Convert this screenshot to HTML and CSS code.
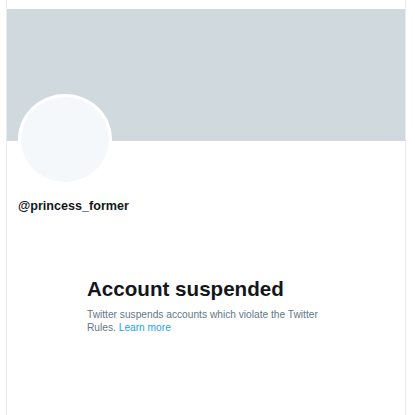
FILE: index.html
```html
<!DOCTYPE html>
<html>
<head>
<meta charset="utf-8">
<link rel="stylesheet" href="styles.css">
</head>
<body>
<div class="page">
  <div class="banner"></div>
  <div class="avatar"></div>
  <div class="handle">@princess_former</div>
  <div class="notice">
    <h1 class="title">Account suspended</h1>
    <p class="desc">Twitter suspends accounts which violate the Twitter Rules. <a class="link" href="#">Learn more</a></p>
  </div>
</div>
</body>
</html>
```
FILE: styles.css
```css
html, body {
  margin: 0;
  padding: 0;
  background: #ffffff;
  font-family: "Liberation Sans", Arial, sans-serif;
}
.page {
  margin-left: 6px;
  width: 398px;
  min-height: 415px;
  border-left: 1px solid #e6ecf0;
  border-right: 1px solid #e6ecf0;
  padding-top: 9px;
  box-sizing: content-box;
}
.banner {
  height: 132px;
  background: #cfd9de;
}
.avatar {
  width: 88px;
  height: 85px;
  margin-top: -47px;
  margin-left: 11px;
  border-radius: 50%;
  border: 3px solid #ffffff;
  background: #f5f8fa;
}
.handle {
  margin-top: 12px;
  margin-left: 11px;
  font-size: 12.6px;
  font-weight: bold;
  color: #14171a;
  line-height: 18px;
}
.notice {
  margin-top: 61px;
  margin-left: 80px;
  width: 240px;
}
.title {
  margin: 0;
  font-size: 20.6px;
  font-weight: bold;
  color: #14171a;
  line-height: 26px;
}
.desc {
  margin: 6px 0 0 0;
  font-size: 10.2px;
  line-height: 13px;
  color: #657786;
}
.link {
  color: #1da1f2;
  text-decoration: none;
}
```
